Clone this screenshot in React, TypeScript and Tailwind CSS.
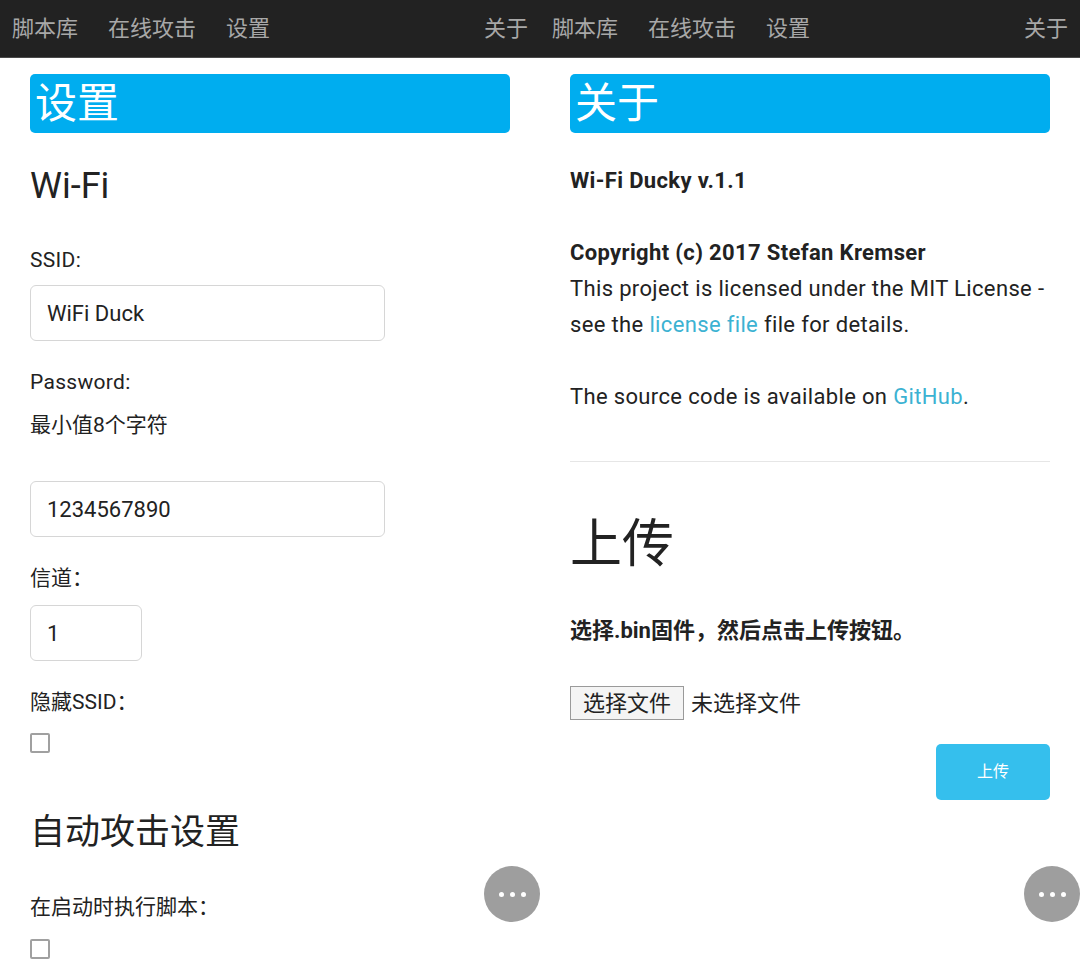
const font = { fontFamily: 'Roboto, "Noto Sans CJK SC", sans-serif' };

function NavBar() {
  return (
    <div className="h-[58px] bg-[#222222] border-b border-[#4a4a4a] flex items-center justify-between pl-[12px] pr-[12px] text-[22px] text-[#a8a8a8]">
      <div className="flex gap-[30px]">
        <span>脚本库</span>
        <span>在线攻击</span>
        <span>设置</span>
      </div>
      <span>关于</span>
    </div>
  );
}

function Banner({ title }: { title: string }) {
  return (
    <div className="mt-[16px] h-[59px] rounded-[5px] bg-[#00adef] flex items-center pl-[5px] text-[42px] leading-none text-white">
      {title}
    </div>
  );
}

function Checkbox() {
  return <div className="w-[20px] h-[20px] border-2 border-[#a0a0a0] rounded-[2px] bg-white" />;
}

function Fab() {
  return (
    <div className="absolute top-[866px] right-0 w-[56px] h-[56px] rounded-full bg-[#9e9e9e] flex items-center justify-center gap-[6px]">
      <span className="w-[5px] h-[5px] rounded-full bg-white" />
      <span className="w-[5px] h-[5px] rounded-full bg-white" />
      <span className="w-[5px] h-[5px] rounded-full bg-white" />
    </div>
  );
}

function TextInput({ value, width }: { value: string; width: string }) {
  return (
    <div className={`${width} h-[56px] border border-[#d6d6d6] rounded-[6px] flex items-center pl-[16px] text-[22px] text-[#222]`}>
      {value}
    </div>
  );
}

function SettingsPanel() {
  return (
    <div className="relative w-[540px] h-[960px] overflow-hidden bg-white">
      <NavBar />
      <div className="px-[30px] flex flex-col text-[#222]">
        <Banner title="设置" />
        <div className="mt-[33px] h-[40px] leading-[40px] text-[36px]">Wi-Fi</div>
        <div className="mt-[40px] h-[28px] leading-[28px] text-[21px] tracking-[0.3px]">SSID:</div>
        <div className="mt-[11px]">
          <TextInput value="WiFi Duck" width="w-[355px]" />
        </div>
        <div className="mt-[27px] h-[28px] leading-[28px] text-[21px] tracking-[0.3px]">Password:</div>
        <div className="mt-[15px] h-[28px] leading-[28px] text-[21px]">最小值8个字符</div>
        <div className="mt-[42px]">
          <TextInput value="1234567890" width="w-[355px]" />
        </div>
        <div className="mt-[27px] h-[28px] leading-[28px] text-[21px]">信道：</div>
        <div className="mt-[13px]">
          <TextInput value="1" width="w-[112px]" />
        </div>
        <div className="mt-[27px] h-[28px] leading-[28px] text-[21px]">隐藏SSID：</div>
        <div className="mt-[17px]">
          <Checkbox />
        </div>
        <div className="mt-[58px] h-[44px] leading-[44px] text-[35px]">自动攻击设置</div>
        <div className="mt-[38px] h-[28px] leading-[28px] text-[21px]">在启动时执行脚本：</div>
        <div className="mt-[18px]">
          <Checkbox />
        </div>
      </div>
      <Fab />
    </div>
  );
}

function AboutPanel() {
  return (
    <div className="relative w-[540px] h-[960px] overflow-hidden bg-white">
      <NavBar />
      <div className="px-[30px] flex flex-col text-[#222]">
        <Banner title="关于" />
        <div className="mt-[30px] text-[22px] tracking-[0.35px] leading-[36px]">
          <div className="font-bold">Wi-Fi Ducky v.1.1</div>
          <div className="h-[36px]" />
          <div className="font-bold">Copyright (c) 2017 Stefan Kremser</div>
          <div>This project is licensed under the MIT License -</div>
          <div>
            see the <span className="text-[#3cb2d2]">license file</span> file for details.
          </div>
          <div className="h-[36px]" />
          <div>
            The source code is available on <span className="text-[#3cb2d2]">GitHub</span>.
          </div>
        </div>
        <div className="mt-[46px] h-px bg-[#e6e6e6]" />
        <div className="mt-[55px] h-[56px] leading-[56px] text-[52px]">上传</div>
        <div className="mt-[44px] h-[28px] leading-[28px] text-[22px] font-bold">选择.bin固件，然后点击上传按钮。</div>
        <div className="mt-[41px] h-[34px] flex items-center text-[22px]">
          <div className="h-[34px] px-[12px] border border-[#9a9a9a] bg-[#f4f4f4] flex items-center">选择文件</div>
          <span className="ml-[7px]">未选择文件</span>
        </div>
        <div className="mt-[24px] flex justify-end">
          <div className="w-[114px] h-[56px] rounded-[5px] bg-[#35bfed] text-white text-[16px] flex items-center justify-center">
            上传
          </div>
        </div>
      </div>
      <Fab />
    </div>
  );
}

export default function App() {
  return (
    <div className="w-[1080px] h-[960px] flex bg-white" style={font}>
      <SettingsPanel />
      <AboutPanel />
    </div>
  );
}
